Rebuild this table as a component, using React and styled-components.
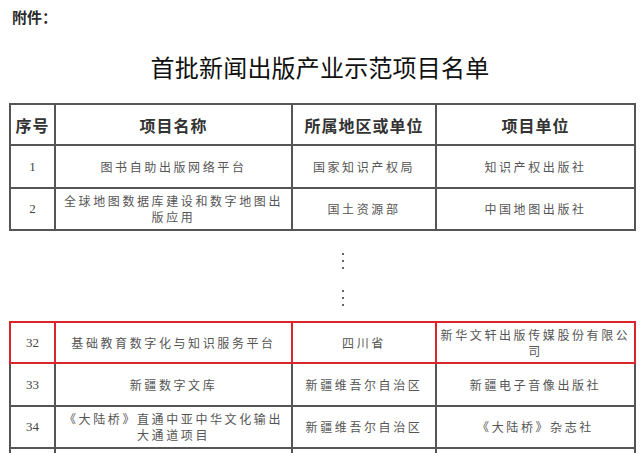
import React from "react";
import styled, { createGlobalStyle } from "styled-components";

const topRows = [
  { no: "1", name: "图书自助出版网络平台", region: "国家知识产权局", unit: "知识产权出版社", h: 43 },
  { no: "2", name: "全球地图数据库建设和数字地图出版应用", region: "国土资源部", unit: "中国地图出版社", h: 42 },
];

const bottomRows = [
  { no: "32", name: "基础教育数字化与知识服务平台", region: "四川省", unit: "新华文轩出版传媒股份有限公司", h: 41, red: true },
  { no: "33", name: "新疆数字文库", region: "新疆维吾尔自治区", unit: "新疆电子音像出版社", h: 43 },
  { no: "34", name: "《大陆桥》直通中亚中华文化输出大通道项目", region: "新疆维吾尔自治区", unit: "《大陆桥》杂志社", h: 42 },
  { no: "", name: "", region: "", unit: "", h: 42 },
];

export default function App() {
  return (
    <>
      <GlobalStyle />
      <Page>
        <Attachment>附件：</Attachment>
        <Title>首批新闻出版产业示范项目名单</Title>

        <Table>
          <ColGroup />
          <tbody>
            <tr>
              <HeadCell style={{ height: 39 }}>序号</HeadCell>
              <HeadCell>项目名称</HeadCell>
              <HeadCell>所属地区或单位</HeadCell>
              <HeadCell>项目单位</HeadCell>
            </tr>
            {topRows.map((r) => (
              <Row key={r.no} row={r} />
            ))}
          </tbody>
        </Table>

        <Gap>
          <Ellipsis>
            <Dot />
            <Dot />
            <Dot />
          </Ellipsis>
          <Ellipsis>
            <Dot />
            <Dot />
            <Dot />
          </Ellipsis>
        </Gap>

        <Table>
          <ColGroup />
          <tbody>
            {bottomRows.map((r, i) => (
              <Row key={i} row={r} />
            ))}
          </tbody>
        </Table>
      </Page>
    </>
  );
}

function ColGroup() {
  return (
    <colgroup>
      <col style={{ width: 45 }} />
      <col style={{ width: 237 }} />
      <col style={{ width: 144 }} />
      <col style={{ width: 199 }} />
    </colgroup>
  );
}

function Row({ row }) {
  return (
    <tr>
      <NumCell $red={row.red} style={{ height: row.h - 2 }}>
        {row.no}
      </NumCell>
      <Cell $red={row.red}>{row.name}</Cell>
      <Cell $red={row.red}>{row.region}</Cell>
      <Cell $red={row.red}>{row.unit}</Cell>
    </tr>
  );
}

const GlobalStyle = createGlobalStyle`
  html, body {
    margin: 0;
    padding: 0;
    background: #fff;
    overflow: hidden;
  }
  body {
    font-family: "Noto Sans CJK SC", "Noto Sans", sans-serif;
    color: #222;
  }
`;

const Page = styled.div`
  width: 640px;
  display: flex;
  flex-direction: column;

  & > * {
    flex-shrink: 0;
  }
`;

const Attachment = styled.div`
  height: 34px;
  line-height: 34px;
  padding-left: 12px;
  font-size: 15px;
  font-weight: 700;
  color: #2a2a2a;
`;

const Title = styled.h1`
  margin: 0;
  height: 69px;
  line-height: 66px;
  text-align: center;
  font-size: 24px;
  font-weight: 400;
  letter-spacing: 0.2px;
  color: #111;
`;

const Table = styled.table`
  margin-left: 9px;
  width: 625px;
  table-layout: fixed;
  border-collapse: collapse;
  border: 2px solid #555;
`;

const HeadCell = styled.td`
  border: 2px solid #555;
  text-align: center;
  vertical-align: middle;
  font-size: 16px;
  font-weight: 700;
  letter-spacing: 1px;
  color: #333;
  padding: 0;
`;

const Cell = styled.td`
  border: 2px solid ${(p) => (p.$red ? "#d9252b" : "#555")};
  text-align: center;
  vertical-align: middle;
  font-size: 12px;
  line-height: 16px;
  letter-spacing: 2.6px;
  color: #555;
  padding: 0 2px;
  word-break: break-all;
`;

const NumCell = styled(Cell)`
  font-family: "Liberation Serif", serif;
  font-size: 13px;
  letter-spacing: 0;
  color: #444;
`;

const Gap = styled.div`
  height: 90px;
  display: flex;
  flex-direction: column;
  align-items: flex-start;
  padding-left: 342px;
  padding-top: 22px;
  gap: 21px;
  box-sizing: border-box;
`;

const Ellipsis = styled.div`
  display: flex;
  flex-direction: column;
  gap: 5px;
`;

const Dot = styled.span`
  width: 2px;
  height: 2px;
  border-radius: 50%;
  background: #333;
`;
